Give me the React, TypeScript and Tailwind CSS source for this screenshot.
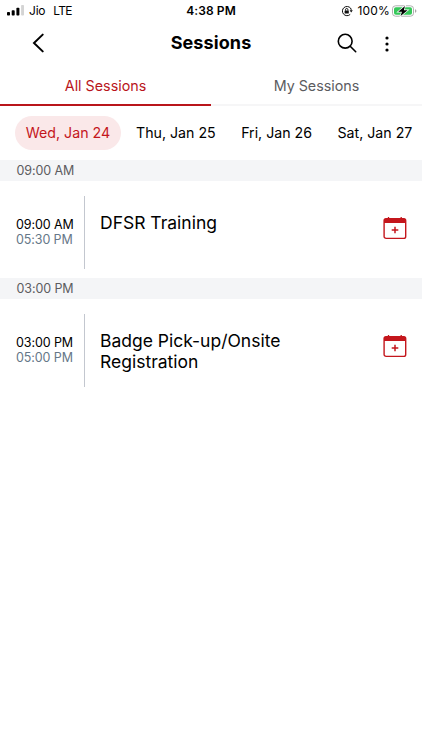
interface Session {
  title: string;
  start: string;
  end: string;
}

const dates = ["Wed, Jan 24", "Thu, Jan 25", "Fri, Jan 26", "Sat, Jan 27"];

const sessions: Session[] = [
  { title: "DFSR Training", start: "09:00 AM", end: "05:30 PM" },
  { title: "Badge Pick-up/Onsite Registration", start: "03:00 PM", end: "05:00 PM" },
];

function StatusBar() {
  return (
    <div className="grid h-[22px] grid-cols-3 items-center text-[12px] leading-none">
      <div className="flex items-center pl-[7px]">
        <svg className="-mt-px" width="17" height="11" viewBox="0 0 17 11">
          <rect x="0" y="7" width="3" height="3.5" rx="0.8" />
          <rect x="4.7" y="5.2" width="3" height="5.3" rx="0.8" />
          <rect x="9.4" y="2.8" width="3" height="7.7" rx="0.8" />
          <rect x="14.1" y="0" width="2.9" height="10.5" rx="0.8" fill="#d4d4d4" />
        </svg>
        <span className="ml-[5px] tracking-[-0.2px]">Jio</span>
        <span className="ml-[8px] tracking-[-0.7px]">LTE</span>
      </div>
      <div className="text-center font-semibold tracking-[0.1px]">4:38 PM</div>
      <div className="flex items-center justify-end pr-[5px]">
        {/* Orientation lock */}
        <svg width="12" height="12" viewBox="0 0 12 12" fill="none" stroke="#111" strokeWidth="1">
          <path d="M9.6 3.2A4.6 4.6 0 1 0 9.2 9.4" />
          <path d="M8.6 5.2h3.2l-1.6 2.2z" fill="#111" stroke="none" />
          <path d="M9.5 3c.5.7.8 1.5.7 2.4" />
          <rect x="3.6" y="5.4" width="4.2" height="3" rx="0.5" fill="#111" stroke="none" />
          <path d="M4.5 5.6v-.9a1.2 1.2 0 0 1 2.4 0v.9" />
        </svg>
        <span className="ml-[4px] tracking-[0.2px]">100%</span>
        {/* Battery */}
        <svg className="-mt-px ml-[2px]" width="25" height="12" viewBox="0 0 25 12">
          <rect x="0.5" y="0.8" width="21" height="10.4" rx="3" fill="#fff" stroke="#b0b0b0" />
          <rect x="2" y="2.2" width="18" height="7.6" rx="1.8" fill="#35c759" />
          <path d="M23 4.2c1 .3 1.4 1 1.4 1.8s-.4 1.5-1.4 1.8z" fill="#a8a8a8" />
          <path
            d="M13 1 6.2 6.7h3.7L8.6 11l7-5.8h-3.7z"
            fill="#000"
            stroke="#fff"
            strokeWidth="1.4"
            paintOrder="stroke"
          />
        </svg>
      </div>
    </div>
  );
}

function CalendarPlus() {
  return (
    <svg width="24" height="24" viewBox="0 0 24 24" fill="none" stroke="#c4161c">
      <rect x="1.1" y="2.6" width="21.6" height="19.8" rx="2" strokeWidth="1.4" />
      <path d="M1 7V4.4a2 2 0 0 1 2-2h18a2 2 0 0 1 2 2V7z" fill="#c4161c" stroke="none" />
      <path d="M5.5 1v2M18.2 1v2" strokeWidth="1.3" />
      <path d="M12 10.7v6.6M8.7 14h6.6" strokeWidth="1.5" />
    </svg>
  );
}

export default function App() {
  return (
    <div className="min-h-[750px] w-[422px] overflow-hidden bg-white font-['Inter',sans-serif] text-black">
      <StatusBar />

      {/* Header */}
      <header className="grid h-[42px] grid-cols-3 items-center">
        <button className="pl-[32px]">
          <svg width="12" height="20" viewBox="0 0 12 20" fill="none" stroke="#000" strokeWidth="2">
            <path d="M10.7 1.6 2 10l8.7 8.4" strokeLinecap="round" />
          </svg>
        </button>
        <h1 className="-mt-px text-center text-[18px] font-bold tracking-[0.1px]">Sessions</h1>
        <div className="flex items-center justify-end pr-[33.5px]">
          <svg width="20" height="20" viewBox="0 0 20 20" fill="none" stroke="#000" strokeWidth="1.6">
            <circle cx="8.2" cy="8.2" r="6.9" />
            <path d="m13.2 13.2 5.5 5.5" strokeLinecap="round" />
          </svg>
          <svg className="mt-px ml-[27.5px]" width="4" height="16" viewBox="0 0 4 16">
            <circle cx="2" cy="2" r="1.6" />
            <circle cx="2" cy="8" r="1.6" />
            <circle cx="2" cy="14" r="1.6" />
          </svg>
        </div>
      </header>

      {/* Tabs */}
      <div className="flex h-[42px] text-[14.3px]">
        <button className="w-[211px] border-b-2 border-[#b9151b] pt-[3px] text-[#b9151b]">All Sessions</button>
        <button className="w-[211px] border-b-2 border-[#f6f6f7] pt-[3px] text-[#5c5c5f]">My Sessions</button>
      </div>

      {/* Dates */}
      <div className="flex h-[54px] items-center pl-[15px] text-[14.2px] whitespace-nowrap">
        {dates.map((date, i) => (
          <button
            key={date}
            className={
              i === 0
                ? "mr-[5px] h-[34px] w-[106px] shrink-0 rounded-full bg-[#fae8e9] text-[#c4161c]"
                : "mr-[5.4px] h-[34px] shrink-0 px-[10px]"
            }
          >
            {date}
          </button>
        ))}
      </div>

      {/* Session list */}
      {sessions.map((session) => (
        <section key={session.title}>
          <div className="flex h-[21px] items-center bg-[#f4f5f7] pt-[2px] pl-[16.5px] text-[12.5px] tracking-[-0.1px] text-[#5c5c5f]">
            {session.start}
          </div>
          <div className="flex h-[97px] pt-[15px]">
            <div className="flex h-[73px] w-[85px] flex-col justify-center border-r border-[#c3c7cf] pb-[2px] pl-[16px] text-[12.5px] leading-[15px] tracking-[-0.1px]">
              <span>{session.start}</span>
              <span className="text-[#667788]">{session.end}</span>
            </div>
            <h2 className="ml-[15px] w-[230px] pt-[15.5px] text-[17.5px] leading-[21px]">{session.title}</h2>
            <button className="mt-[20px] mr-[15px] ml-auto h-[24px]">
              <CalendarPlus />
            </button>
          </div>
        </section>
      ))}
    </div>
  );
}
